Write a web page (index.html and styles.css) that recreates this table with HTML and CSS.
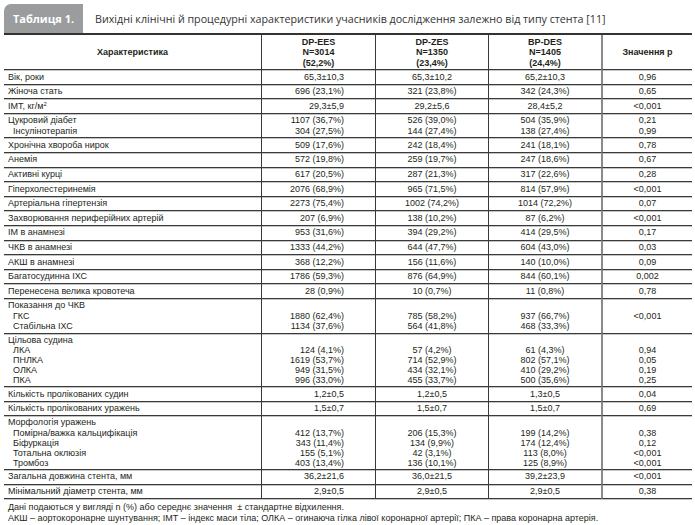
FILE: index.html
```html
<!DOCTYPE html>
<html lang="uk">
<head>
<meta charset="utf-8">
<title>Таблиця 1</title>
<link rel="stylesheet" href="styles.css">
</head>
<body>
<div class="page">
  <div class="caption">
    <div class="tab">Таблиця 1.</div>
    <div class="title">Вихідні клінічні й процедурні характеристики учасників дослідження залежно від типу стента [11]</div>
  </div>
  <table class="tbl">
    <colgroup>
      <col class="w1"><col class="w2"><col class="w3"><col class="w4"><col class="w5">
    </colgroup>
    <thead>
      <tr>
        <th class="name-h">Характеристика</th>
        <th><div class="ln">DP-EES</div><div class="ln">N=3014</div><div class="ln">(52,2%)</div></th>
        <th><div class="ln">DP-ZES</div><div class="ln">N=1350</div><div class="ln">(23,4%)</div></th>
        <th><div class="ln">BP-DES</div><div class="ln">N=1405</div><div class="ln">(24,4%)</div></th>
        <th>Значення p</th>
      </tr>
    </thead>
    <tbody>
      <tr><td class="name">Вік, роки</td><td class="v2">65,3±10,3</td><td>65,3±10,2</td><td>65,2±10,3</td><td>0,96</td></tr>
      <tr><td class="name">Жіноча стать</td><td class="v2">696 (23,1%)</td><td>321 (23,8%)</td><td>342 (24,3%)</td><td>0,65</td></tr>
      <tr><td class="name">ІМТ, кг/м<sup>2</sup></td><td class="v2">29,3±5,9</td><td>29,2±5,6</td><td>28,4±5,2</td><td>&lt;0,001</td></tr>
      <tr class="ml">
        <td class="name"><div class="ln">Цукровий діабет</div><div class="ln sub">Інсулінотерапія</div></td>
        <td class="v2"><div class="ln">1107 (36,7%)</div><div class="ln">304 (27,5%)</div></td>
        <td><div class="ln">526 (39,0%)</div><div class="ln">144 (27,4%)</div></td>
        <td><div class="ln">504 (35,9%)</div><div class="ln">138 (27,4%)</div></td>
        <td><div class="ln">0,21</div><div class="ln">0,99</div></td>
      </tr>
      <tr><td class="name">Хронічна хвороба нирок</td><td class="v2">509 (17,6%)</td><td>242 (18,4%)</td><td>241 (18,1%)</td><td>0,78</td></tr>
      <tr><td class="name">Анемія</td><td class="v2">572 (19,8%)</td><td>259 (19,7%)</td><td>247 (18,6%)</td><td>0,67</td></tr>
      <tr><td class="name">Активні курці</td><td class="v2">617 (20,5%)</td><td>287 (21,3%)</td><td>317 (22,6%)</td><td>0,28</td></tr>
      <tr><td class="name">Гіперхолестеринемія</td><td class="v2">2076 (68,9%)</td><td>965 (71,5%)</td><td>814 (57,9%)</td><td>&lt;0,001</td></tr>
      <tr><td class="name">Артеріальна гіпертензія</td><td class="v2">2273 (75,4%)</td><td>1002 (74,2%)</td><td>1014 (72,2%)</td><td>0,07</td></tr>
      <tr><td class="name">Захворювання периферійних артерій</td><td class="v2">207 (6,9%)</td><td>138 (10,2%)</td><td>87 (6,2%)</td><td>&lt;0,001</td></tr>
      <tr><td class="name">ІМ в анамнезі</td><td class="v2">953 (31,6%)</td><td>394 (29,2%)</td><td>414 (29,5%)</td><td>0,17</td></tr>
      <tr><td class="name">ЧКВ в анамнезі</td><td class="v2">1333 (44,2%)</td><td>644 (47,7%)</td><td>604 (43,0%)</td><td>0,03</td></tr>
      <tr><td class="name">АКШ в анамнезі</td><td class="v2">368 (12,2%)</td><td>156 (11,6%)</td><td>140 (10,0%)</td><td>0,09</td></tr>
      <tr><td class="name">Багатосудинна ІХС</td><td class="v2">1786 (59,3%)</td><td>876 (64,9%)</td><td>844 (60,1%)</td><td>0,002</td></tr>
      <tr><td class="name">Перенесена велика кровотеча</td><td class="v2">28 (0,9%)</td><td>10 (0,7%)</td><td>11 (0,8%)</td><td>0,78</td></tr>
      <tr class="ml">
        <td class="name"><div class="ln">Показання до ЧКВ</div><div class="ln sub">ГКС</div><div class="ln sub">Стабільна ІХС</div></td>
        <td class="v2"><div class="ln"></div><div class="ln">1880 (62,4%)</div><div class="ln">1134 (37,6%)</div></td>
        <td><div class="ln"></div><div class="ln">785 (58,2%)</div><div class="ln">564 (41,8%)</div></td>
        <td><div class="ln"></div><div class="ln">937 (66,7%)</div><div class="ln">468 (33,3%)</div></td>
        <td><div class="ln"></div><div class="ln">&lt;0,001</div></td>
      </tr>
      <tr class="ml5">
        <td class="name"><div class="ln">Цільова судина</div><div class="ln sub">ЛКА</div><div class="ln sub">ПНЛКА</div><div class="ln sub">ОЛКА</div><div class="ln sub">ПКА</div></td>
        <td class="v2"><div class="ln"></div><div class="ln">124 (4,1%)</div><div class="ln">1619 (53,7%)</div><div class="ln">949 (31,5%)</div><div class="ln">996 (33,0%)</div></td>
        <td><div class="ln"></div><div class="ln">57 (4,2%)</div><div class="ln">714 (52,9%)</div><div class="ln">434 (32,1%)</div><div class="ln">455 (33,7%)</div></td>
        <td><div class="ln"></div><div class="ln">61 (4,3%)</div><div class="ln">802 (57,1%)</div><div class="ln">410 (29,2%)</div><div class="ln">500 (35,6%)</div></td>
        <td><div class="ln"></div><div class="ln">0,94</div><div class="ln">0,05</div><div class="ln">0,19</div><div class="ln">0,25</div></td>
      </tr>
      <tr><td class="name">Кількість пролікованих судин</td><td class="v2">1,2±0,5</td><td>1,2±0,5</td><td>1,3±0,5</td><td>0,04</td></tr>
      <tr><td class="name">Кількість пролікованих уражень</td><td class="v2">1,5±0,7</td><td>1,5±0,7</td><td>1,5±0,7</td><td>0,69</td></tr>
      <tr class="ml5">
        <td class="name"><div class="ln">Морфологія уражень</div><div class="ln sub">Помірна/важка кальцифікація</div><div class="ln sub">Біфуркація</div><div class="ln sub">Тотальна оклюзія</div><div class="ln sub">Тромбоз</div></td>
        <td class="v2"><div class="ln"></div><div class="ln">412 (13,7%)</div><div class="ln">343 (11,4%)</div><div class="ln">155 (5,1%)</div><div class="ln">403 (13,4%)</div></td>
        <td><div class="ln"></div><div class="ln">206 (15,3%)</div><div class="ln">134 (9,9%)</div><div class="ln">42 (3,1%)</div><div class="ln">136 (10,1%)</div></td>
        <td><div class="ln"></div><div class="ln">199 (14,2%)</div><div class="ln">174 (12,4%)</div><div class="ln">113 (8,0%)</div><div class="ln">125 (8,9%)</div></td>
        <td><div class="ln"></div><div class="ln">0,38</div><div class="ln">0,12</div><div class="ln">&lt;0,001</div><div class="ln">&lt;0,001</div></td>
      </tr>
      <tr><td class="name">Загальна довжина стента, мм</td><td class="v2">36,2±21,6</td><td>36,0±21,5</td><td>39,2±23,9</td><td>&lt;0,001</td></tr>
      <tr><td class="name">Мінімальний діаметр стента, мм</td><td class="v2">2,9±0,5</td><td>2,9±0,5</td><td>2,9±0,5</td><td>0,38</td></tr>
    </tbody>
  </table>
  <div class="notes">
    <p>Дані подаються у вигляді n (%) або середнє значення &nbsp;± стандартне відхилення.</p>
    <p>АКШ – аортокоронарне шунтування; ІМТ – індекс маси тіла; ОЛКА – огинаюча гілка лівої коронарної артерії; ПКА – права коронарна артерія.</p>
  </div>
</div>
</body>
</html>
```
FILE: styles.css
```css
html, body {
  margin: 0;
  padding: 0;
  background: #ffffff;
}
body {
  font-family: "Liberation Sans", Arial, sans-serif;
  color: #231f20;
}
.page {
  padding: 4px 3px 0 4px;
}
.caption {
  display: flex;
  align-items: center;
  height: 29px;
  font-family: "Open Sans", "Noto Sans", sans-serif;
}
.tab {
  width: 79px;
  height: 29px;
  background: #9b9c9e;
  border-top-left-radius: 7px;
  color: #ffffff;
  font-weight: 700;
  font-size: 11px;
  display: flex;
  align-items: center;
  justify-content: center;
}
.title {
  margin-left: 12px;
  font-size: 10.7px;
  color: #333333;
  white-space: nowrap;
}
.tbl {
  width: 688px;
  table-layout: fixed;
  border-collapse: separate;
  border-spacing: 0;
  border-top: 2px solid #333333;
  font-size: 9px;
}
.w1 { width: 257px; }
.w2 { width: 114px; }
.w3 { width: 113px; }
.w4 { width: 113px; }
.w5 { width: 91px; }
.tbl th,
.tbl td {
  padding: 1.5px 0 1.5px 0;
  border-bottom: 1px solid #3a3a3a;
  border-left: 1px solid #3a3a3a;
  box-shadow: 0 1px 0 #c4c4c4;
  text-align: center;
  vertical-align: top;
  line-height: 10.6px;
  white-space: nowrap;
}
.tbl th {
  font-weight: 700;
  padding: 1.5px 0 1px 0;
  height: 31.5px;
  vertical-align: middle;
}
.tbl th .ln {
  height: 10.5px;
  line-height: 10.5px;
}
.tbl th:first-child,
.tbl td:first-child {
  border-left: none;
}
.tbl th:last-child,
.tbl td:last-child {
  border-left: 2px solid #8a8a8a;
}
.tbl td.name {
  text-align: left;
  padding-left: 4px;
}
.tbl td.v2 {
  text-align: right;
  padding-right: 31px;
}
.ln {
  display: block;
}
.tbl tr.ml .ln {
  height: 10.3px;
  line-height: 10.3px;
}
.tbl tr.ml5 td {
  padding-top: 1px;
  padding-bottom: 1px;
}
.tbl tr.ml5 .ln {
  height: 10.1px;
  line-height: 10.1px;
}
.sub {
  padding-left: 5px;
}
sup {
  font-size: 6px;
  line-height: 0;
  vertical-align: 3px;
}
.notes {
  padding: 3px 0 0 4px;
  font-size: 9px;
  line-height: 11px;
  color: #231f20;
}
.notes p {
  margin: 0;
}
```
